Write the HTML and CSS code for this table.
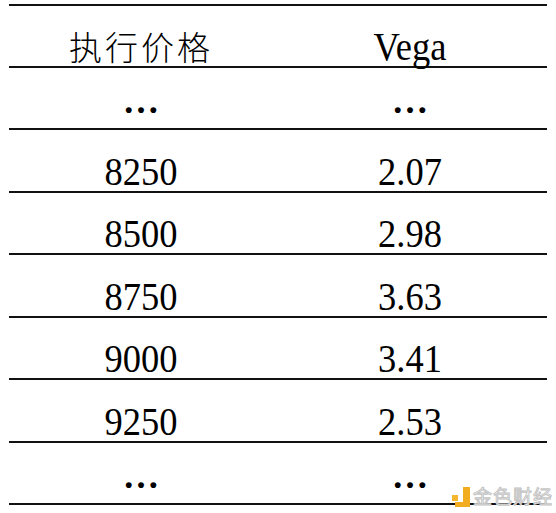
FILE: index.html
```html
<!DOCTYPE html>
<html lang="zh">
<head>
<meta charset="utf-8">
<title>Vega</title>
<link rel="stylesheet" href="styles.css">
</head>
<body>
<div class="page">
  <div class="table">
    <div class="row head"><div class="cell cjk">执行价格</div><div class="cell">Vega</div></div>
    <div class="row"><div class="cell dots">…</div><div class="cell dots">…</div></div>
    <div class="row"><div class="cell">8250</div><div class="cell">2.07</div></div>
    <div class="row"><div class="cell">8500</div><div class="cell">2.98</div></div>
    <div class="row"><div class="cell">8750</div><div class="cell">3.63</div></div>
    <div class="row"><div class="cell">9000</div><div class="cell">3.41</div></div>
    <div class="row"><div class="cell">9250</div><div class="cell">2.53</div></div>
    <div class="row"><div class="cell dots">…</div><div class="cell dots">…</div></div>
  </div>
  <div class="mark">
    <svg class="logo" width="18" height="20" viewBox="0 0 18 20">
      <rect x="0" y="8" width="6" height="6" fill="#f4b62c"/>
      <path d="M11 0 H18 V20 H3 V15 H11 Z" fill="#f1ac1f"/>
    </svg>
    <span class="mark-text">金色财经</span>
  </div>
</div>
</body>
</html>
```
FILE: styles.css
```css
html, body {
  margin: 0;
  padding: 0;
  background: #ffffff;
}
.page {
  position: relative;
  width: 556px;
  height: 513px;
  padding: 4px 9px 0 9px;
  box-sizing: border-box;
}
.table {
  width: 538px;
  border-top: 2px solid #111;
}
.row {
  display: grid;
  grid-template-columns: 1fr 1fr;
  height: 62.5px;
  box-sizing: border-box;
  border-bottom: 2px solid #111;
  align-items: end;
}
.row:first-child {
  height: 61.5px;
}
.cell {
  text-align: center;
  padding-right: 5px;
  font-family: "Liberation Serif", "Times New Roman", serif;
  font-size: 36.5px;
  line-height: 40px;
  color: #000;
  transform: translateY(2.5px) scaleY(1.11);
  transform-origin: center bottom;
}
.cjk {
  font-family: "Noto Sans CJK SC", sans-serif;
  font-size: 33px;
  letter-spacing: 3px;
  font-weight: 300;
  transform: translateY(0px);
}
.dots {
  font-weight: bold;
  transform: translateY(-7px);
}
.mark {
  position: absolute;
  left: 452px;
  top: 485px;
  display: flex;
  align-items: flex-end;
  gap: 3px;
}
.logo {
  display: block;
}
.mark-text {
  font-family: "Noto Sans CJK SC", sans-serif;
  font-size: 19px;
  line-height: 22px;
  color: #ffffff;
  -webkit-text-stroke: 1px #c4c4c4;
  letter-spacing: 1px;
}
```
